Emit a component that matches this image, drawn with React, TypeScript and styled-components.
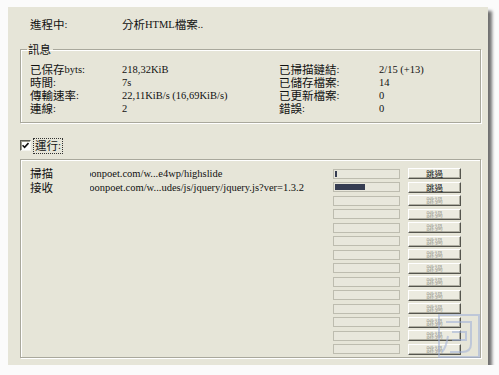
import React from "react";
import styled, { createGlobalStyle } from "styled-components";

const GlobalStyle = createGlobalStyle`
  html, body {
    margin: 0;
    padding: 0;
    background: #fbfbfb;
  }
  body {
    font-family: "Noto Sans CJK TC", "Liberation Serif", serif;
    color: #111;
  }
`;

const Window = styled.div`
  position: relative;
  box-sizing: border-box;
  width: 480px;
  height: 358px;
  margin: 7px 0 0 8px;
  padding: 11px 7px 7px 12px;
  display: flex;
  flex-direction: column;
  background: #e6e5d8;
  box-shadow: 4px 4px 3px rgba(0, 0, 0, 0.55);
`;

// CJK and Latin runs are sized separately, like the bitmap UI font
const Cjk = styled.span`
  display: inline-block;
  vertical-align: top;
  line-height: 13px;
  font-family: "Noto Sans CJK TC", sans-serif;
  font-size: 11.5px;
`;

const Latin = styled.span`
  display: inline-block;
  vertical-align: top;
  line-height: 12px;
  padding-top: 1px;
  font-family: "Liberation Serif", serif;
  font-size: 10.5px;
`;

const Line = styled.div`
  height: 13px;
  line-height: 13px;
  white-space: nowrap;
`;

const StatusRow = styled.div`
  display: grid;
  grid-template-columns: 92px auto;
  padding-left: 10px;
  margin: 0 0 12px;
`;

const Group = styled.fieldset`
  margin: 0;
  padding: 7px 7px 7px 6px;
  border: 1px solid #a9a89c;
  box-shadow: inset 1px 1px 0 #fff, 1px 1px 0 #fff;
  min-width: 0;
`;

const Legend = styled.legend`
  padding: 0 2px 0 1px;
  line-height: 13px;
  font-family: "Noto Sans CJK TC", sans-serif;
  font-size: 11.5px;
`;

const InfoGrid = styled.div`
  display: grid;
  grid-template-columns: 92px 157px 100px auto;
  grid-auto-rows: 13px;
  padding-left: 3px;
`;

const CheckRow = styled.div`
  display: flex;
  align-items: center;
  height: 15px;
  margin-top: 15px;
`;

const CheckBox = styled.span`
  box-sizing: border-box;
  width: 11px;
  height: 11px;
  background: #fff;
  border-top: 1px solid #5a5a52;
  border-left: 1px solid #5a5a52;
  border-right: 1px solid #f4f4ee;
  border-bottom: 1px solid #f4f4ee;
  box-shadow: inset 1px 1px 0 #9d9c90;
  display: flex;
  align-items: center;
  justify-content: center;
`;

const FocusLabel = styled.span`
  margin-left: 2px;
  padding: 0 1px;
  height: 14px;
  line-height: 14px;
  border: 1px dotted #333;
  white-space: nowrap;
`;

const TransferBox = styled.div`
  flex: 1;
  margin-top: 6px;
  padding-top: 7px;
  border: 1px solid #a9a89c;
  box-shadow: inset 1px 1px 0 #fff, 1px 1px 0 #fff;
`;

const TransferRow = styled.div`
  display: grid;
  grid-template-columns: 60px 243px 67px 61px;
  align-items: center;
  height: 13.5px;
  padding-left: 9px;
`;

const Url = styled.div<{ $shift: number }>`
  overflow: hidden;
  height: 13px;
  line-height: 13px;
  white-space: nowrap;
  font-family: "Liberation Serif", serif;
  font-size: 10.5px;
  text-indent: ${({ $shift }) => -$shift}px;
`;

const Bar = styled.div`
  box-sizing: border-box;
  height: 10px;
  padding: 1px;
  border: 1px solid #bdbcaf;
  background: #e8e7dc;
`;

const BarFill = styled.div`
  height: 100%;
  background: #363d52;
`;

const SkipButton = styled.div<{ $enabled: boolean }>`
  box-sizing: border-box;
  height: 11px;
  margin-left: 8px;
  border-top: 1px solid #fff;
  border-left: 1px solid #fff;
  border-right: 1px solid #55554d;
  border-bottom: 1px solid #55554d;
  box-shadow: inset -1px -1px 0 #b0afa3;
  background: #ecebe0;
  text-align: center;
  line-height: 9px;
  font-family: "Noto Sans CJK TC", sans-serif;
  font-size: 8.5px;
  color: ${({ $enabled }) => ($enabled ? "#111" : "#a6a59a")};
`;

const Watermark = styled.svg`
  position: absolute;
  right: 8px;
  bottom: 7px;
  opacity: 0.55;
`;

type Transfer = { name: string; url: string; shift: number; progress: number };

const transfers: Transfer[] = [
  { name: "掃描", url: "oonpoet.com/w...e4wp/highslide", shift: 4, progress: 3 },
  { name: "接收", url: "moonpoet.com/w...udes/js/jquery/jquery.js?ver=1.3.2", shift: 9, progress: 48 },
];

const info: [string, string, string, string][] = [
  ["已保存", "218,32KiB", "已掃描鏈結", "2/15 (+13)"],
  ["時間", "7s", "已儲存檔案", "14"],
  ["傳輸速率", "22,11KiB/s (16,69KiB/s)", "已更新檔案", "0"],
  ["連線", "2", "錯誤", "0"],
];

const App: React.FC = () => {
  const rows = Array.from({ length: 14 }, (_, i) => transfers[i]);
  return (
    <>
      <GlobalStyle />
      <Window>
        <StatusRow>
          <Line>
            <Cjk>進程中</Cjk>
            <Latin>:</Latin>
          </Line>
          <Line>
            <Cjk>分析</Cjk>
            <Latin>HTML</Latin>
            <Cjk>檔案</Cjk>
            <Latin>..</Latin>
          </Line>
        </StatusRow>

        <Group>
          <Legend>訊息</Legend>
          <InfoGrid>
            {info.map(([l1, v1, l2, v2], i) => (
              <React.Fragment key={i}>
                <Line>
                  <Cjk>{l1}</Cjk>
                  <Latin>{i === 0 ? "byts:" : ":"}</Latin>
                </Line>
                <Line>
                  <Latin>{v1}</Latin>
                </Line>
                <Line>
                  <Cjk>{l2}</Cjk>
                  <Latin>:</Latin>
                </Line>
                <Line>
                  <Latin>{v2}</Latin>
                </Line>
              </React.Fragment>
            ))}
          </InfoGrid>
        </Group>

        <CheckRow>
          <CheckBox>
            <svg width="7" height="7" viewBox="0 0 7 7">
              <path d="M0.5 3.2 L2.6 5.4 L6.5 1" fill="none" stroke="#111" strokeWidth="1.6" />
            </svg>
          </CheckBox>
          <FocusLabel>
            <Cjk>運行</Cjk>
            <Latin>:</Latin>
          </FocusLabel>
        </CheckRow>

        <TransferBox>
          {rows.map((t, i) => (
            <TransferRow key={i}>
              <Line>{t && <Cjk>{t.name}</Cjk>}</Line>
              <Url $shift={t ? t.shift : 0}>{t ? t.url : ""}</Url>
              <Bar>{t && <BarFill style={{ width: `${t.progress}%` }} />}</Bar>
              <SkipButton $enabled={!!t}>跳過</SkipButton>
            </TransferRow>
          ))}
        </TransferBox>

        <Watermark width="42" height="44" viewBox="0 0 42 44">
          <rect x="1" y="1" width="40" height="42" fill="none" stroke="#9fb0d8" strokeWidth="2" />
          <path d="M8 8 H33 V30 Q33 38 24 38 H12" fill="none" stroke="#9fb0d8" strokeWidth="2" />
          <path d="M14 18 H28 V26 H14" fill="none" stroke="#9fb0d8" strokeWidth="2" />
          <path d="M10 22 Q8 34 4 38" fill="none" stroke="#9fb0d8" strokeWidth="2" />
        </Watermark>
      </Window>
    </>
  );
};

export default App;
